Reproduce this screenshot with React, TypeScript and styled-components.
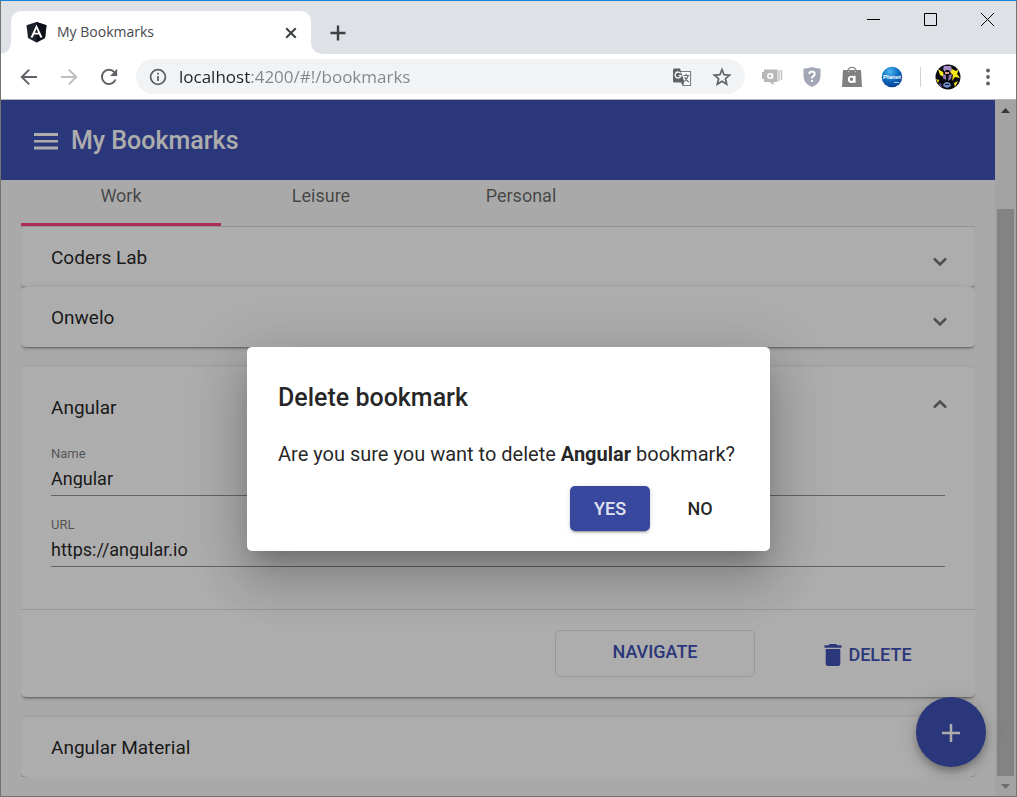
import React, { useState } from "react";
import styled, { createGlobalStyle, css } from "styled-components";

const GlobalStyle = createGlobalStyle`
  *, *::before, *::after { box-sizing: border-box; }
  html, body { margin: 0; padding: 0; }
  body { font-family: Roboto, "Liberation Sans", sans-serif; color: rgba(0, 0, 0, 0.87); }
  button, input { font: inherit; color: inherit; border: 0; padding: 0; margin: 0; background: none; outline: none; }
  button { cursor: pointer; }
  svg { display: block; }
`;

const primary = "#3f51b5";
const accent = "#ff4081";

/* Browser window */

const Window = styled.div`
  display: flex;
  flex-direction: column;
  height: 100vh;
  min-height: 720px;
  border: 1px solid #737373;
  border-top-color: #1883d7;
  background: #fff;
`;

const TabStrip = styled.div`
  display: flex;
  flex: none;
  height: 53px;
  background: #dee1e6;
`;

const BrowserTab = styled.div`
  position: relative;
  display: flex;
  align-items: center;
  width: 300px;
  margin: 10px 0 0 10px;
  padding: 0 10px 0 15px;
  border-radius: 10px 10px 0 0;
  background: #fff;
  font: 14px/20px "Open Sans", "Noto Sans", sans-serif;
  color: #45494d;

  &::before,
  &::after {
    content: "";
    position: absolute;
    bottom: 0;
    width: 10px;
    height: 10px;
  }
  &::before {
    right: 100%;
    background: radial-gradient(circle at 0 0, transparent 9px, #fff 10px);
  }
  &::after {
    left: 100%;
    background: radial-gradient(circle at 100% 0, transparent 9px, #fff 10px);
  }
`;

const TabTitle = styled.span`
  flex: 1;
  padding-bottom: 2px;
  margin-left: 10px;
`;

const IconButton = styled.button<{ $w?: number; $h?: number }>`
  display: flex;
  flex: none;
  align-items: center;
  justify-content: center;
  width: ${(p) => p.$w ?? 40}px;
  height: ${(p) => p.$h ?? 36}px;
`;

const NewTab = styled(IconButton)`
  margin: 14px auto 0 7px;
`;

const Toolbar = styled.div`
  display: flex;
  flex: none;
  align-items: center;
  height: 46px;
  padding: 0 8px;
  border-bottom: 1px solid #b6b6b6;
  background: #fff;
`;

const Omnibox = styled.div`
  display: flex;
  flex: 1;
  align-items: center;
  height: 35px;
  margin: 0 7px;
  padding: 0 3px 0 2px;
  border-radius: 18px;
  background: #f1f3f4;
`;

const Address = styled.input`
  flex: 1;
  min-width: 0;
  height: 28px;
  padding-left: 1px;
  font: 17px/28px "Open Sans", "Noto Sans", sans-serif;
  color: #202124;
  background: linear-gradient(to right, #202124 73px, #80868b 73px);
  background-clip: text;
  -webkit-background-clip: text;
  -webkit-text-fill-color: transparent;
`;

const Separator = styled.span`
  width: 1px;
  height: 20px;
  margin: 0 7px 0 8px;
  background: #cfd1d4;
`;

/* Page */

const Viewport = styled.div`
  position: relative;
  display: flex;
  flex: 1;
  min-height: 0;
  overflow: hidden;
  background: #fafafa;
`;

const Page = styled.div`
  position: relative;
  flex: 1;
  min-width: 0;
`;

const Header = styled.header`
  display: flex;
  align-items: center;
  height: 80px;
  padding: 2px 33px 0;
  background: ${primary};
  color: #fff;
`;

const HeaderTitle = styled.h1`
  margin: 0 0 0 13px;
  font-size: 25px;
  line-height: 40px;
  font-weight: 500;
`;

const Content = styled.main`
  padding: 0 20px;
`;

const Tabs = styled.div`
  display: flex;
  height: 47px;
  border-bottom: 1px solid rgba(0, 0, 0, 0.12);
`;

const Tab = styled.button<{ $active?: boolean }>`
  width: 200px;
  padding-bottom: ${(p) => (p.$active ? 11 : 14)}px;
  border-bottom: ${(p) => (p.$active ? `3px solid ${accent}` : "0")};
  font-size: 18px;
  line-height: 20px;
  color: rgba(0, 0, 0, 0.6);
`;

const TabBody = styled.div`
  overflow: hidden;
`;

const panelShadow = css`
  box-shadow: 0 4px 1px -3px rgba(0, 0, 0, 0.2), 0 2px 2px 0 rgba(0, 0, 0, 0.14),
    0 1px 6px 0 rgba(0, 0, 0, 0.12);
`;

const Panel = styled.section<{ $spaced?: boolean }>`
  margin-top: ${(p) => (p.$spaced ? 20 : 0)}px;
  border-radius: 5px;
  background: #fff;
  ${panelShadow}
`;

const PanelHead = styled.button<{ $open?: boolean }>`
  display: flex;
  align-items: center;
  justify-content: space-between;
  width: 100%;
  height: ${(p) => (p.$open ? 80 : 60)}px;
  padding: 2px 28px 0 30px;
  font-size: 19px;
  line-height: 24px;
`;

const Chevron = styled.svg<{ $up?: boolean }>`
  margin: ${(p) => (p.$up ? "0 0 8px" : "8px 0 0")};
  transform: ${(p) => (p.$up ? "rotate(180deg)" : "none")};
`;

const Fields = styled.div`
  display: flex;
  flex-direction: column;
  gap: 22px;
  padding: 0 30px 42px;
`;

const Field = styled.label`
  display: flex;
  flex-direction: column;
  border-bottom: 1px solid rgba(0, 0, 0, 0.42);
  padding-bottom: 7px;
`;

const FieldName = styled.span`
  font-size: 13px;
  line-height: 14px;
  color: rgba(0, 0, 0, 0.54);
`;

const FieldInput = styled.input`
  height: 19px;
  margin-top: 8px;
  font-size: 18px;
  line-height: 20px;
`;

const Actions = styled.div`
  display: flex;
  justify-content: flex-end;
  gap: 20px;
  padding: 20px 14px;
  border-top: 1px solid rgba(0, 0, 0, 0.12);
`;

const ActionButton = styled.button<{ $outlined?: boolean }>`
  display: flex;
  align-items: center;
  justify-content: center;
  gap: 6px;
  width: ${(p) => (p.$outlined ? 200 : 186)}px;
  height: 47px;
  padding: ${(p) => (p.$outlined ? "0 0 4px" : "2px 0 0")};
  border: ${(p) => (p.$outlined ? "1px solid rgba(0, 0, 0, 0.12)" : "0")};
  border-radius: 5px;
  font-size: 18px;
  font-weight: 500;
  color: ${primary};
`;

const Fab = styled.button`
  position: absolute;
  right: 9px;
  bottom: 29px;
  display: flex;
  align-items: center;
  justify-content: center;
  width: 70px;
  height: 70px;
  padding-top: 2px;
  border-radius: 50%;
  background: ${primary};
  box-shadow: 0 4px 6px -1px rgba(0, 0, 0, 0.2), 0 7px 12px 0 rgba(0, 0, 0, 0.14),
    0 1px 22px 0 rgba(0, 0, 0, 0.12);
`;

const Scrollbar = styled.div`
  display: flex;
  flex: none;
  flex-direction: column;
  align-items: center;
  width: 21px;
  background: #f1f1f1;
`;

const ScrollArrow = styled.div`
  display: flex;
  align-items: center;
  justify-content: center;
  height: 20px;
`;

const ScrollTrack = styled.div`
  display: flex;
  flex: 1;
  padding-top: 89px;
`;

const ScrollThumb = styled.div`
  width: 17px;
  background: #c1c1c1;
`;

/* Dialog */

const Backdrop = styled.div`
  position: absolute;
  inset: 0;
  display: flex;
  align-items: center;
  justify-content: center;
  padding-top: 2px;
  background: rgba(0, 0, 0, 0.32);
`;

const Dialog = styled.div`
  width: 523px;
  max-width: 80vw;
  padding: 31px 30px 20px 31px;
  border-radius: 5px;
  background: #fff;
  box-shadow: 0 14px 19px -9px rgba(0, 0, 0, 0.2), 0 30px 48px 4px rgba(0, 0, 0, 0.14),
    0 12px 58px 10px rgba(0, 0, 0, 0.12);
`;

const DialogTitle = styled.h2`
  margin: 0 0 24px;
  font-size: 25px;
  line-height: 40px;
  font-weight: 500;
`;

const DialogText = styled.p`
  margin: 0 0 20px;
  font-size: 20px;
  line-height: 24px;
`;

const DialogActions = styled.div`
  display: flex;
  justify-content: flex-end;
  gap: 10px;
`;

const DialogButton = styled.button<{ $raised?: boolean }>`
  width: 80px;
  height: 45px;
  border-radius: 5px;
  font-size: 18px;
  font-weight: 500;
  ${(p) =>
    p.$raised &&
    css`
      background: #38489f;
      color: #e1e3ef;
      ${panelShadow}
    `}
`;

/* Drawings */

const AngularLogo = () => (
  <svg width="21" height="21" viewBox="0 0 21 21">
    <path d="M10.500 0 20.500 3.300 19 16 10.500 20.500 2 16 .5 3.300Z" fill="#1b222b" />
    <path d="M10.500 0V20.500L19 16 20.500 3.300Z" fill="#0b1018" />
    <path d="M10.500 2.500 16.500 15.500H14.200L13 12.500H8L6.800 15.500H4.500ZM10.500 6.800 8.900 10.700H12.100Z" fill="#fff" fillRule="evenodd" />
  </svg>
);

const Stroke = ({ d, w = 2, size = 20, color = "#5f6368" }: { d: string; w?: number; size?: number; color?: string }) => (
  <svg width={size} height={size} viewBox="0 0 20 20" fill="none" stroke={color} strokeWidth={w}>
    <path d={d} />
  </svg>
);

const ReloadIcon = () => (
  <svg width="20" height="20" viewBox="0 0 20 20">
    <path d="M16.600 12.500A7.100 7.100 0 1 1 15.300 5.200" fill="none" stroke="#5f6368" strokeWidth="2" />
    <path d="M18.200 1.800V9H11Z" fill="#5f6368" />
  </svg>
);

const InfoIcon = () => (
  <svg width="18" height="18" viewBox="0 0 18 18" fill="none" stroke="#5f6368" strokeWidth="1.800">
    <circle cx="9" cy="9" r="7.400" />
    <path d="M9 8V13M9 4.800V6.600" />
  </svg>
);

const TranslateIcon = () => (
  <svg width="20" height="20" viewBox="0 0 20 20">
    <path d="M8 4.500H18.500V18.500H11L10 15" fill="#fff" stroke="#7b7f83" strokeWidth="1.200" />
    <path d="M2.500 1.500H8L12.500 15.500H2.500Q1 15.500 1 14V3Q1 1.500 2.500 1.500Z" fill="#5f6368" />
    <path d="M8.600 6.400A3 3 0 1 0 9 8.700H6.600" fill="none" stroke="#fff" strokeWidth="1.300" />
    <path d="M11.300 8.500H17.200M14.200 6.800V8.500M16.200 8.500Q15.200 12.500 12.500 14.200M12.600 10Q13.800 13 16.800 15.200" fill="none" stroke="#6b6f73" strokeWidth="1.200" />
    <path d="M9 15.500H12.500L10.800 18.500Z" fill="#5f6368" />
  </svg>
);

const StarIcon = () => (
  <svg width="20" height="20" viewBox="0 0 20 20" fill="none" stroke="#5f6368" strokeWidth="1.700">
    <path d="M10 2.600 12.100 7.700 17.600 8.100 13.400 11.700 14.700 17.100 10 14.200 5.300 17.100 6.600 11.700 2.400 8.100 7.900 7.700Z" />
  </svg>
);

const ChatIcon = () => (
  <svg width="22" height="20" viewBox="0 0 22 20">
    <path d="M3 2.500H16.500V15H12.500V18L8.500 15H3V12H1V5H3Z" fill="#b7b7b7" />
    <path d="M18 3V14M20.500 3V13" stroke="#c4c4c4" strokeWidth="1.500" />
    <circle cx="9" cy="9" r="2.200" fill="none" stroke="#fff" strokeWidth="1.500" />
    <path d="M11.400 6.500V11.700" stroke="#fff" strokeWidth="1.500" />
  </svg>
);

const ShieldIcon = () => (
  <svg width="20" height="22" viewBox="0 0 20 22">
    <path d="M10 1Q14 2.500 18.500 2.500V10Q18.500 17.500 10 21 1.500 17.500 1.500 10V2.500Q6 2.500 10 1Z" fill="#a2a7b5" />
    <path d="M7.300 8Q7.300 5.500 10 5.500T12.700 8Q12.700 9.300 11.300 10.200 10 11 10 12.500" fill="none" stroke="#fff" strokeWidth="2" />
    <path d="M10 14V16" stroke="#fff" strokeWidth="2" />
  </svg>
);

const BagIcon = () => (
  <svg width="22" height="22" viewBox="0 0 22 22">
    <path d="M7 4.500Q7.500 1.300 11 1.300T15 4.500" fill="none" stroke="#8a8a8a" strokeWidth="1.300" />
    <path d="M2 4H20L21 21H1Z" fill="#808080" />
    <path d="M7 5.500A1 1 0 0 0 8 5.500M14 5.500A1 1 0 0 0 15 5.500" stroke="#ddd" strokeWidth="1.200" />
    <circle cx="10.500" cy="13.300" r="2.700" fill="none" stroke="#fff" strokeWidth="1.900" />
    <path d="M13.600 9.700V16.900" stroke="#fff" strokeWidth="1.900" />
  </svg>
);

const PlanetIcon = () => (
  <svg width="22" height="22" viewBox="0 0 22 22">
    <defs>
      <radialGradient id="globe" cx="40%" cy="25%" r="75%">
        <stop offset="0" stopColor="#4cb5ee" />
        <stop offset=".5" stopColor="#1173c6" />
        <stop offset="1" stopColor="#063f91" />
      </radialGradient>
    </defs>
    <circle cx="11" cy="11" r="10.300" fill="url(#globe)" />
    <text x="11" y="13" textAnchor="middle" fontFamily="Liberation Sans, sans-serif" fontWeight="700" fontSize="6" fill="#fff">
      Planet
    </text>
    <path d="M13 16.500H18" stroke="#9fd0f2" />
  </svg>
);

const Avatar = () => (
  <svg width="26" height="26" viewBox="0 0 26 26">
    <defs>
      <clipPath id="face">
        <circle cx="13" cy="13" r="12.500" />
      </clipPath>
    </defs>
    <g clipPath="url(#face)">
      <path d="M0 0H26V26H0Z" fill="#0b0a10" />
      <path d="M3 5 8 8 9 13 5 11ZM17 5 21 7 24 5 22 10 25 14 20 13 17 17 18 11 15 8ZM19 19 23 17 20 23ZM1 15 4 16 3 19Z" fill="#f7e815" />
      <path d="M9 2H16L17 6 15 8 14 6H11L10 8 8 5Z" fill="#a78bc4" />
      <path d="M8 10 11 11V16L8 14ZM14 11 17 10 16 15 13 17Z" fill="#8c78ad" />
      <path d="M9 19 12 18 15 19 16 22 12 24 8 22Z" fill="#6f8fce" />
      <path d="M10 8H14V10H10Z" fill="#d99a86" />
      <path d="M10 20H14V21H10Z" fill="#15131d" />
      <path d="M3 20 6 19 7 24Z" fill="#5a4a90" />
    </g>
  </svg>
);

const DotsIcon = () => (
  <svg width="6" height="18" viewBox="0 0 6 18" fill="#5f6368">
    <circle cx="3" cy="2.500" r="1.900" />
    <circle cx="3" cy="9" r="1.900" />
    <circle cx="3" cy="15.500" r="1.900" />
  </svg>
);

const TrashIcon = () => (
  <svg width="18" height="22" viewBox="0 0 18 22" fill={primary}>
    <path d="M.5 1.200H4.700L5.800 0H12.200L13.300 1.200H17.500V3.800H.5ZM1.700 5H16.300V19.700Q16.300 22 14 22H4Q1.700 22 1.700 19.700Z" />
  </svg>
);

const PanelChevron = ({ up }: { up?: boolean }) => (
  <Chevron $up={up} width="14" height="10" viewBox="0 0 14 10" fill="none" stroke="#757575" strokeWidth="2.500">
    <path d="M1 1.500 7 7.500 13 1.500" />
  </Chevron>
);

const Triangle = ({ down }: { down?: boolean }) => (
  <svg width="9" height="5" viewBox="0 0 9 5" fill={down ? "#a3a3a3" : "#505050"}>
    <path d={down ? "M0 0H9L4.500 5Z" : "M0 5H9L4.500 0Z"} />
  </svg>
);

export default function App() {
  const [address, setAddress] = useState("localhost:4200/#!/bookmarks");
  const [name, setName] = useState("Angular");
  const [url, setUrl] = useState("https://angular.io");

  return (
    <>
      <GlobalStyle />
      <Window>
        <TabStrip>
          <BrowserTab>
            <AngularLogo />
            <TabTitle>My Bookmarks</TabTitle>
            <IconButton $w={20} $h={20} aria-label="Close tab">
              <Stroke d="M5.200 5.200 14.800 14.800M14.800 5.200 5.200 14.800" color="#3c4043" />
            </IconButton>
          </BrowserTab>
          <NewTab aria-label="New tab">
            <Stroke d="M10 2.500V17.500M2.500 10H17.500" w={2.4} color="#3c4043" />
          </NewTab>
          <IconButton $w={57} $h={37} aria-label="Minimize">
            <svg width="13" height="13" viewBox="0 0 13 13" stroke="#000">
              <path d="M0 6.500H13" />
            </svg>
          </IconButton>
          <IconButton $w={57} $h={37} aria-label="Maximize">
            <svg width="13" height="13" viewBox="0 0 13 13" stroke="#000" fill="none">
              <path d="M.5.5H12.500V12.500H.5Z" />
            </svg>
          </IconButton>
          <IconButton $w={57} $h={37} aria-label="Close">
            <svg width="13" height="13" viewBox="0 0 13 13" stroke="#000">
              <path d="M0 0 13 13M13 0 0 13" />
            </svg>
          </IconButton>
        </TabStrip>

        <Toolbar>
          <IconButton aria-label="Back">
            <Stroke d="M18 10H3M10.200 2.600 2.800 10 10.200 17.400" />
          </IconButton>
          <IconButton aria-label="Forward">
            <Stroke d="M2 10H17M9.800 2.600 17.200 10 9.800 17.400" color="#bcbec0" />
          </IconButton>
          <IconButton aria-label="Reload">
            <ReloadIcon />
          </IconButton>
          <Omnibox>
            <IconButton aria-label="Site information">
              <InfoIcon />
            </IconButton>
            <Address aria-label="Address" value={address} onChange={(e) => setAddress(e.target.value)} />
            <IconButton aria-label="Translate">
              <TranslateIcon />
            </IconButton>
            <IconButton aria-label="Bookmark this page">
              <StarIcon />
            </IconButton>
          </Omnibox>
          <IconButton aria-label="Chat extension">
            <ChatIcon />
          </IconButton>
          <IconButton aria-label="Shield extension">
            <ShieldIcon />
          </IconButton>
          <IconButton aria-label="Shopping extension">
            <BagIcon />
          </IconButton>
          <IconButton aria-label="Planet extension">
            <PlanetIcon />
          </IconButton>
          <Separator />
          <IconButton aria-label="Profile">
            <Avatar />
          </IconButton>
          <IconButton aria-label="Menu">
            <DotsIcon />
          </IconButton>
        </Toolbar>

        <Viewport>
          <Page>
            <Header>
              <IconButton $w={24} $h={24} aria-label="Open menu">
                <svg width="24" height="18" viewBox="0 0 24 18" fill="#fff">
                  <path d="M0 1H24V4H0ZM0 8H24V10.500H0ZM0 14.500H24V17.500H0Z" />
                </svg>
              </IconButton>
              <HeaderTitle>My Bookmarks</HeaderTitle>
            </Header>
            <Content>
              <Tabs role="tablist">
                <Tab role="tab" aria-selected $active>
                  Work
                </Tab>
                <Tab role="tab">Leisure</Tab>
                <Tab role="tab">Personal</Tab>
              </Tabs>
              <TabBody>
                <Panel>
                  <PanelHead>
                    Coders Lab
                    <PanelChevron />
                  </PanelHead>
                </Panel>
                <Panel>
                  <PanelHead>
                    Onwelo
                    <PanelChevron />
                  </PanelHead>
                </Panel>
                <Panel $spaced>
                  <PanelHead $open aria-expanded>
                    Angular
                    <PanelChevron up />
                  </PanelHead>
                  <Fields>
                    <Field>
                      <FieldName>Name</FieldName>
                      <FieldInput value={name} onChange={(e) => setName(e.target.value)} />
                    </Field>
                    <Field>
                      <FieldName>URL</FieldName>
                      <FieldInput value={url} onChange={(e) => setUrl(e.target.value)} />
                    </Field>
                  </Fields>
                  <Actions>
                    <ActionButton $outlined>NAVIGATE</ActionButton>
                    <ActionButton>
                      <TrashIcon />
                      DELETE
                    </ActionButton>
                  </Actions>
                </Panel>
                <Panel $spaced>
                  <PanelHead>Angular Material</PanelHead>
                </Panel>
              </TabBody>
            </Content>
            <Fab aria-label="Add bookmark">
              <svg width="18" height="18" viewBox="0 0 18 18" stroke="#fff" strokeWidth="2.500">
                <path d="M9 0V18M0 9H18" />
              </svg>
            </Fab>
          </Page>
          <Scrollbar>
            <ScrollArrow>
              <Triangle />
            </ScrollArrow>
            <ScrollTrack>
              <ScrollThumb />
            </ScrollTrack>
            <ScrollArrow>
              <Triangle down />
            </ScrollArrow>
          </Scrollbar>
          <Backdrop>
            <Dialog role="dialog" aria-modal aria-labelledby="dialog-title">
              <DialogTitle id="dialog-title">Delete bookmark</DialogTitle>
              <DialogText>
                Are you sure you want to delete <b>Angular</b> bookmark?
              </DialogText>
              <DialogActions>
                <DialogButton $raised>YES</DialogButton>
                <DialogButton>NO</DialogButton>
              </DialogActions>
            </Dialog>
          </Backdrop>
        </Viewport>
      </Window>
    </>
  );
}
